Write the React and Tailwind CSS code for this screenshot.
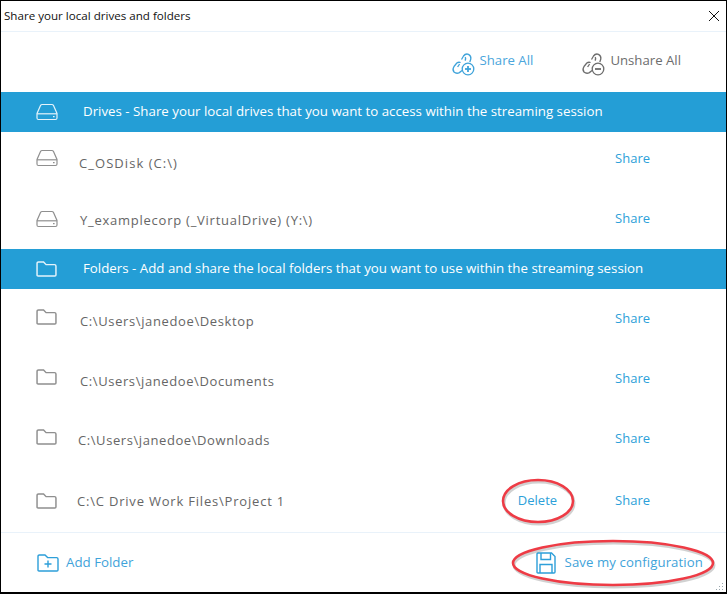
const font = "font-['Open_Sans','Noto_Sans',sans-serif]";
const Drive = ({ c }) => (
  <svg width="22" height="18" viewBox="0 0 22 18" fill="none" stroke={c} strokeWidth="1.2">
    <path d="M1 10.5 L4.5 2.5 Q5 1.5 6.2 1.5 H15.8 Q17 1.5 17.5 2.5 L21 10.5 V15 Q21 16.5 19.5 16.5 H2.5 Q1 16.5 1 15 Z" />
    <path d="M1 10.8 H21" />
    <path d="M17 13.6 H18.6" />
  </svg>
);
const Folder = ({ c }) => (
  <svg width="21" height="16" viewBox="0 0 20 16" preserveAspectRatio="none" fill="none" stroke={c} strokeWidth="1.4">
    <path d="M1 14 V2.4 Q1 1 2.4 1 H7.2 L9.6 3.6 H17.6 Q19 3.6 19 5 V14 Q19 15 18 15 H2 Q1 15 1 14 Z" />
  </svg>
);
const Links = ({ c, minus }) => (
  <svg width="24" height="24" viewBox="0 0 24 24" fill="none" stroke={c} strokeWidth="1.3">
    <path d="M10.5 7.5 L12.5 4 Q14.5 1.2 17.5 2.3 Q20.4 3.8 19.8 7 L18.8 10" />
    <path d="M14 8.6 Q15.3 6.4 14 5.2" />
    <path d="M9.6 10.5 Q7.5 9.8 5.8 11 L3 14.5 Q1 17.5 3 20 Q5.5 22.2 8.4 20.6 L11 18.5" />
    <path d="M6.6 15 L8.6 12" />
    <circle cx="17" cy="17" r="5.8" />
    <path d="M14 17 H20" strokeWidth="1.8" />
    {!minus && <path d="M17 14 V20" strokeWidth="1.8" />}
  </svg>
);
const Band = ({ icon, children }) => (
  <div className="h-10 bg-[#249ed6] flex items-center text-white text-[13.3px] shrink-0">
    <span className="w-[82px] pl-[35px] flex shrink-0">{icon}</span>
    <span>{children}</span>
  </div>
);
const Row = ({ icon, text, h, textClass, shareClass = "", iconClass = "", del }) => (
  <div className={`relative flex items-center shrink-0 ${h} pl-[35px] pr-[76px]`}>
    <span className={`w-[43px] flex shrink-0 ${iconClass}`}>{icon}</span>
    <span className={`text-[13px] text-[#666] flex-1 ${textClass}`}>{text}</span>
    {del && <span className="text-[13px] text-[#2d9fd9] mr-[59px]">Delete</span>}
    <span className={`text-[13px] text-[#2d9fd9] ${shareClass}`}>Share</span>
  </div>
);
export default function App() {
  return (
    <div className={`relative w-[727px] h-[594px] bg-white border border-black border-b-2 flex flex-col overflow-hidden ${font}`}>
      <div className="h-[31px] shrink-0 flex items-center justify-between pl-[3px] pr-[6px] border-b border-[#e9f2fa] text-[11.6px] text-[#111]">
        <span>Share your local drives and folders</span>
        <svg width="12" height="12" viewBox="0 0 12 12" stroke="#111" strokeWidth="1"><path d="M1 1 L11 11 M11 1 L1 11" /></svg>
      </div>
      <div className="h-[60px] shrink-0 flex items-center justify-end pr-[45px] text-[13.2px]">
        <span className="flex items-center text-[#4aa6dc] gap-[5px] mr-[48px]"><span className="flex mt-1"><Links c="#3fa3da" /></span><span className="-mt-[2px]">Share All</span></span>
        <span className="flex items-center text-[#6d6d6d] gap-[5px]"><span className="flex mt-1"><Links c="#6d6d6d" minus /></span><span className="-mt-[2px]">Unshare All</span></span>
      </div>
      <Band icon={<Drive c="#e4f3fb" />}>Drives - Share your local drives that you want to access within the streaming session</Band>
      <Row icon={<Drive c="#8f8f8f" />} iconClass="-mt-2" text="C_OSDisk (C:\)" h="h-[59px]" textClass="mt-[5px] tracking-[1.05px]" shareClass="-mt-[6px]" />
      <Row icon={<Drive c="#8f8f8f" />} iconClass="-mt-[2px]" text="Y_examplecorp (_VirtualDrive) (Y:\)" h="h-[58px]" textClass="ml-px mt-[1px] tracking-[0.75px]" shareClass="-mt-[2px]" />
      <Band icon={<Folder c="#e4f3fb" />}>Folders - Add and share the local folders that you want to use within the streaming session</Band>
      <Row icon={<Folder c="#8f8f8f" />} iconClass="-mt-1" text="C:\Users\janedoe\Desktop" h="h-[60px]" textClass="ml-px mt-[5px] tracking-[0.62px]" />
      <Row icon={<Folder c="#8f8f8f" />} iconClass="-mt-1" text="C:\Users\janedoe\Documents" h="h-[60px]" textClass="ml-px mt-[5px] tracking-[0.6px]" />
      <Row icon={<Folder c="#8f8f8f" />} iconClass="-mt-1" text="C:\Users\janedoe\Downloads" h="h-[60px]" textClass="-ml-px mt-[3px] tracking-[0.58px]" />
      <Row icon={<Folder c="#8f8f8f" />} text="C:\C Drive Work Files\Project 1" h="h-[63px]" textClass="-ml-[2px] mt-[3px] tracking-[0.8px]" shareClass="-ml-[1px]" del />
      <div className="flex-1 border-t border-[#e9f2fa] flex items-center justify-between pl-[36px] pr-[23px] text-[13.3px] text-[#3fa3da]">
        <span className="flex items-center gap-[7px]">
          <svg width="22" height="18" viewBox="0 0 22 18" fill="none" stroke="#2d9fd9" strokeWidth="1.4">
            <path d="M1 16 V2.4 Q1 1 2.4 1 H8 L10.6 3.6 H19.6 Q21 3.6 21 5 V16 Q21 17 20 17 H2 Q1 17 1 16 Z" />
            <path d="M7.5 10 H14.5 M11 6.5 V13.5" />
          </svg>
          Add Folder
        </span>
        <span className="flex items-center gap-[9px]">
          <svg width="20" height="22" viewBox="0 0 20 22" fill="none" stroke="#2d9fd9" strokeWidth="1.4">
            <path d="M1 2 Q1 1 2 1 H15.5 L19 4.5 V20 Q19 21 18 21 H2 Q1 21 1 20 Z" />
            <path d="M5 1 V7.5 H14.5 V1" />
            <path d="M4 21 V12.5 H16 V21" />
          </svg>
          <span className="text-[13.2px] tracking-[0.1px]">Save my configuration</span>
        </span>
      </div>
      <svg className="absolute -left-px -top-px pointer-events-none" width="727" height="594" fill="none">
        <g stroke="#000" strokeOpacity="0.18" strokeWidth="3" transform="translate(1 2)">
          <ellipse cx="538" cy="501" rx="35" ry="21" />
          <ellipse cx="613" cy="563" rx="100" ry="22" />
        </g>
        <g stroke="#ee3b45" strokeWidth="2.6">
          <ellipse cx="538" cy="501" rx="35" ry="21" />
          <ellipse cx="613" cy="563" rx="100" ry="22" />
        </g>
        <g fill="#9aa7ae">
          <rect x="722" y="589" width="1" height="1"/><rect x="719" y="589" width="1" height="1"/><rect x="716" y="589" width="1" height="1"/>
          <rect x="722" y="586" width="1" height="1"/><rect x="719" y="586" width="1" height="1"/><rect x="722" y="583" width="1" height="1"/>
        </g>
      </svg>
    </div>
  );
}
